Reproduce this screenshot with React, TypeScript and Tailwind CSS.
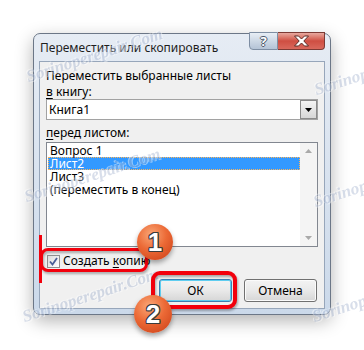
import React from 'react';

const ui = { fontFamily: '"Noto Sans", "Open Sans", "DejaVu Sans", sans-serif' };

function Watermark({ className }: { className: string }) {
  return (
    <div
      className={`pointer-events-none absolute origin-bottom-left -rotate-[18deg] whitespace-nowrap text-[17px] font-bold italic leading-[20px] text-[#a9b7d2] opacity-45 [text-shadow:1px_1px_0_#ffffff,-1px_-1px_0_#ffffff] ${className}`}
      style={{ fontFamily: '"Liberation Serif", serif' }}
    >
      Sorinoperepair.Com
    </div>
  );
}

function Badge({ n, className }: { n: string; className: string }) {
  return (
    <div
      className={`absolute flex items-center justify-center rounded-full bg-[radial-gradient(circle_at_40%_30%,#f9a878_0%,#ec6a36_45%,#c93c15_100%)] shadow-[0_3px_5px_rgba(0,0,0,0.35)] ${className}`}
    >
      <span
        className="text-[26px] font-bold leading-none text-white [text-shadow:1px_0_0_#3b3b3b,-1px_0_0_#3b3b3b,0_1px_0_#3b3b3b,0_-1px_0_#3b3b3b,1px_1px_0_#3b3b3b,-1px_-1px_0_#3b3b3b,1px_-1px_0_#3b3b3b,-1px_1px_0_#3b3b3b]"
        style={{ fontFamily: '"Liberation Sans", Arial, sans-serif' }}
      >
        {n}
      </span>
    </div>
  );
}

export default function App() {
  const items = ['Вопрос 1', 'Лист2', 'Лист3', '(переместить в конец)'];

  return (
    <div className="relative h-[350px] w-[364px] overflow-hidden bg-white text-[12px] text-black" style={ui}>
      <div className="pl-[33px] pt-[33px]">
        {/* окно */}
        <div className="flex h-[282px] w-[298px] flex-col rounded-[7px] border border-[#6c7787] bg-gradient-to-b from-[#e6ecf4] to-[#cbd9ea] px-[5px] pb-[5px] shadow-[0_6px_18px_rgba(0,0,0,0.3)]">
          {/* заголовок */}
          <div className="flex h-[27px] items-start justify-between">
            <div className="pl-[1px] pt-[6px] text-[12px] leading-[16px] text-[#1e1e1e]">Переместить или скопировать</div>
            <div className="-mt-[2px] flex">
              <div className="flex h-[18px] w-[29px] items-center justify-center rounded-bl-[4px] border border-[#7e8ea3] bg-gradient-to-b from-[#e8eef5] via-[#cdd8e5] to-[#b4c3d6]">
                <span className="text-[13px] font-bold leading-none text-white [text-shadow:1px_0_0_#4c5a6c,-1px_0_0_#4c5a6c,0_1px_0_#4c5a6c,0_-1px_0_#4c5a6c]">?</span>
              </div>
              <div className="flex h-[18px] w-[47px] items-center justify-center rounded-br-[4px] border border-l-0 border-[#7d3a34] bg-gradient-to-b from-[#e7a89f] via-[#cf4e42] to-[#d9685c]">
                <svg width="17" height="12" viewBox="0 0 17 12">
                  <path
                    d="M1.5 1 H5.5 L8.5 4 L11.5 1 H15.5 L10.8 6 L15.5 11 H11.5 L8.5 8 L5.5 11 H1.5 L6.2 6 Z"
                    fill="#ffffff"
                    stroke="#5a2a25"
                    strokeWidth="1"
                    strokeLinejoin="round"
                  />
                </svg>
              </div>
            </div>
          </div>

          {/* клиентская область */}
          <div className="flex flex-1 flex-col border border-[#97a6ba] bg-[#f0f0f0] px-[6px] pt-[6px]">
            <div className="h-[16px] leading-[16px]">Переместить выбранные листы</div>
            <div className="h-[15px] leading-[16px]">
              <span className="underline underline-offset-2">в</span> книгу:
            </div>

            <div className="flex h-[21px] border border-[#a2a2a2] bg-white">
              <div className="flex-1 pl-[2px] leading-[19px]">Книга1</div>
              <div className="flex w-[17px] items-center justify-center border border-[#8a8a8a] bg-gradient-to-b from-[#f4f4f4] to-[#d6d6d6]">
                <svg width="7" height="4" viewBox="0 0 7 4">
                  <path d="M0 0 H7 L3.5 4 Z" fill="#000000" />
                </svg>
              </div>
            </div>

            <div className="mt-[5px] h-[16px] leading-[16px]">
              <span className="underline underline-offset-2">п</span>еред листом:
            </div>

            <div className="mt-[1px] flex h-[105px] border border-[#828790] bg-white">
              <div className="flex-1 pl-[1px] pt-[1px]">
                {items.map((t) => (
                  <div
                    key={t}
                    className={
                      t === 'Лист2'
                        ? 'h-[13px] border border-dotted border-[#ffb457] bg-[#3399ff] pl-[1px] leading-[11px] text-white'
                        : 'h-[13px] pl-[2px] leading-[13px]'
                    }
                  >
                    {t}
                  </div>
                ))}
              </div>
              <div className="flex w-[17px] flex-col items-center justify-between bg-[#f4f4f4] py-[6px]">
                <svg width="7" height="4" viewBox="0 0 7 4">
                  <path d="M0 4 H7 L3.5 0 Z" fill="#a9a9a9" />
                </svg>
                <svg width="7" height="4" viewBox="0 0 7 4">
                  <path d="M0 0 H7 L3.5 4 Z" fill="#a9a9a9" />
                </svg>
              </div>
            </div>

            <div className="ml-[1px] mt-[6px] flex h-[16px] items-center gap-[3px]">
              <div className="flex h-[13px] w-[13px] items-center justify-center border border-[#8e8f8f] bg-gradient-to-br from-[#dcdcdc] to-[#ffffff]">
                <svg width="9" height="9" viewBox="0 0 9 9">
                  <path d="M1 4.5 L3.5 7.5 L8 1" fill="none" stroke="#4a5f97" strokeWidth="1.8" />
                </svg>
              </div>
              <span className="leading-[16px]">
                Создать <span className="underline underline-offset-2">к</span>опию
              </span>
            </div>

            <div className="mt-[10px] flex justify-end gap-[12px] pr-[1px]">
              <button className="h-[23px] w-[73px] rounded-[3px] border border-[#3c7fb1] bg-gradient-to-b from-[#f3f3f3] via-[#e9e9e9] to-[#d6d6d6] leading-[20px] shadow-[inset_0_0_0_1px_#5fcdf0]">
                ОК
              </button>
              <button className="h-[23px] w-[73px] rounded-[3px] border border-[#707070] bg-gradient-to-b from-[#f3f3f3] via-[#e9e9e9] to-[#d6d6d6] leading-[20px] shadow-[inset_0_0_0_1px_#fbfbfb]">
                Отмена
              </button>
            </div>
          </div>
        </div>
      </div>

      {/* водяные знаки */}
      <Watermark className="left-[30px] top-[67px]" />
      <Watermark className="left-[28px] top-[187px]" />
      <Watermark className="left-[26px] top-[307px]" />
      <Watermark className="left-[318px] top-[80px]" />
      <Watermark className="left-[317px] top-[192px]" />
      <Watermark className="left-[316px] top-[307px]" />

      {/* пометки */}
      <div className="absolute left-[40px] top-[248px] h-[24px] w-[108px] rounded-[8px] border-[3px] border-[#f2000c] drop-shadow-[1px_2px_1px_rgba(0,0,0,0.3)]" />
      <div className="absolute left-[39px] top-[235px] h-[48px] w-[3px] bg-[#f2000c]" />
      <div className="absolute left-[151px] top-[271px] h-[38px] w-[86px] rounded-[9px] border-[4px] border-[#f2000c] drop-shadow-[1px_2px_1px_rgba(0,0,0,0.3)]" />

      <Badge n="1" className="left-[137px] top-[224px] h-[36px] w-[36px]" />
      <Badge n="2" className="left-[134px] top-[295px] h-[38px] w-[38px]" />
    </div>
  );
}
